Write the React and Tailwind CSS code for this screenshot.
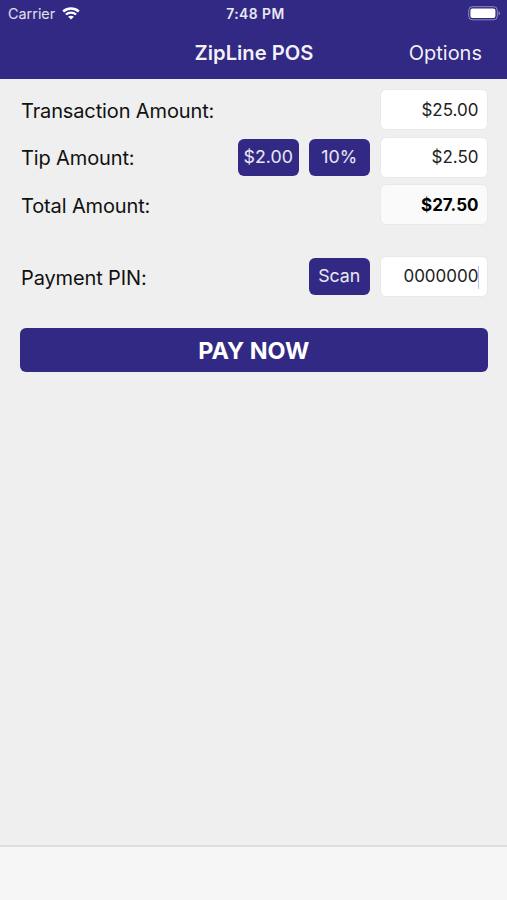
import React, { useState } from 'react';

const WifiIcon = () => (
  <svg width="18" height="13" viewBox="0 0 18 13" fill="none" stroke="white">
    <path d="M1.2 4.5C5.6 0.5 12.4 0.5 16.8 4.5" strokeWidth="2.5" />
    <path d="M3.9 7.5C6.8 4.9 11.2 4.9 14.1 7.5" strokeWidth="2.2" />
    <path d="M9 12.6L6.1 9.8C7.6 8.5 10.4 8.5 11.9 9.8Z" fill="white" stroke="none" />
  </svg>
);

const BatteryIcon = () => (
  <svg width="33" height="15" viewBox="0 0 33 15" fill="none">
    <rect x="0.7" y="0.7" width="28.6" height="13.1" rx="3.6" stroke="white" strokeOpacity="0.45" strokeWidth="1" />
    <rect x="2.4" y="2.4" width="25" height="9.6" rx="2" fill="white" />
    <path d="M30.6 5.2C32.3 5.9 32.3 8.6 30.6 9.3Z" fill="white" fillOpacity="0.5" />
  </svg>
);

const StatusBar = () => (
  <div className="grid h-[27px] grid-cols-3 items-center pl-[8px] pr-[6px] text-white">
    <div className="flex items-center gap-[6.5px]">
      <span className="text-[14.4px] text-white/85">Carrier</span>
      <WifiIcon />
    </div>
    <p className="pl-[2px] pt-px text-center text-[13.8px] font-semibold tracking-[0.5px] text-white/90">7:48 PM</p>
    <div className="flex justify-end">
      <BatteryIcon />
    </div>
  </div>
);

const NavBar = () => (
  <div className="grid h-[52px] grid-cols-[1fr_auto_1fr] items-center pr-[25px] text-white/95">
    <span />
    <h1 className="pl-[26px] text-[20.2px] font-semibold">ZipLine POS</h1>
    <button className="justify-self-end text-[20px]">Options</button>
  </div>
);

const SmallButton = ({ children }) => (
  <button className="h-[37px] w-[61.5px] rounded-[6px] bg-[#322984] text-[17.8px] text-white/90">
    {children}
  </button>
);

const FormRow = ({ label, children }) => (
  <div className="flex h-[41px] items-center gap-[9.5px]">
    <span className="flex-1 pl-px pt-[2px] text-[20px] tracking-[-0.13px] text-[#111]">{label}</span>
    {children}
  </div>
);

const inputBase = 'h-[41px] w-[108px] rounded-[6px] border border-[#e9e9e9] pr-[8px] text-right text-[17px] outline-none';

const App = () => {
  const [amount, setAmount] = useState('$25.00');
  const [tip, setTip] = useState('$2.50');

  return (
    <div className="flex h-[900px] w-[507px] flex-col overflow-hidden bg-[#efefef] font-['Inter',sans-serif]">
      <header className="h-[79px] bg-[#322984]">
        <StatusBar />
        <NavBar />
      </header>

      <main className="flex-1 pl-[20px] pr-[19.5px] pt-[10px]">
        <div className="flex flex-col gap-[6.5px]">
          <FormRow label="Transaction Amount:">
            <input className={`${inputBase} bg-white text-[#222]`} value={amount} onChange={(e) => setAmount(e.target.value)} />
          </FormRow>
          <FormRow label="Tip Amount:">
            <SmallButton>$2.00</SmallButton>
            <SmallButton>10%</SmallButton>
            <input className={`${inputBase} bg-white text-[#222]`} value={tip} onChange={(e) => setTip(e.target.value)} />
          </FormRow>
          <FormRow label="Total Amount:">
            <input className={`${inputBase} bg-[#fafafa] font-bold text-black`} value="$27.50" readOnly />
          </FormRow>
        </div>

        <div className="mt-[31px]">
          <FormRow label="Payment PIN:">
            <SmallButton>Scan</SmallButton>
            {/* Focused field with its caret */}
            <div className={`${inputBase} flex items-center justify-end bg-white pt-px text-[#222]`}>
              <span>0000000</span>
              <span className="-ml-px h-[23px] w-px bg-[#b9c0f2]" />
            </div>
          </FormRow>
        </div>

        <button className="mt-[31px] h-[44px] w-full rounded-[6px] bg-[#322984] pt-px text-[23.4px] font-bold text-white">
          PAY NOW
        </button>
      </main>

      <footer className="h-[55px] border-t-2 border-[#dedede] bg-[#f6f6f6]" />
    </div>
  );
};

export default App;
